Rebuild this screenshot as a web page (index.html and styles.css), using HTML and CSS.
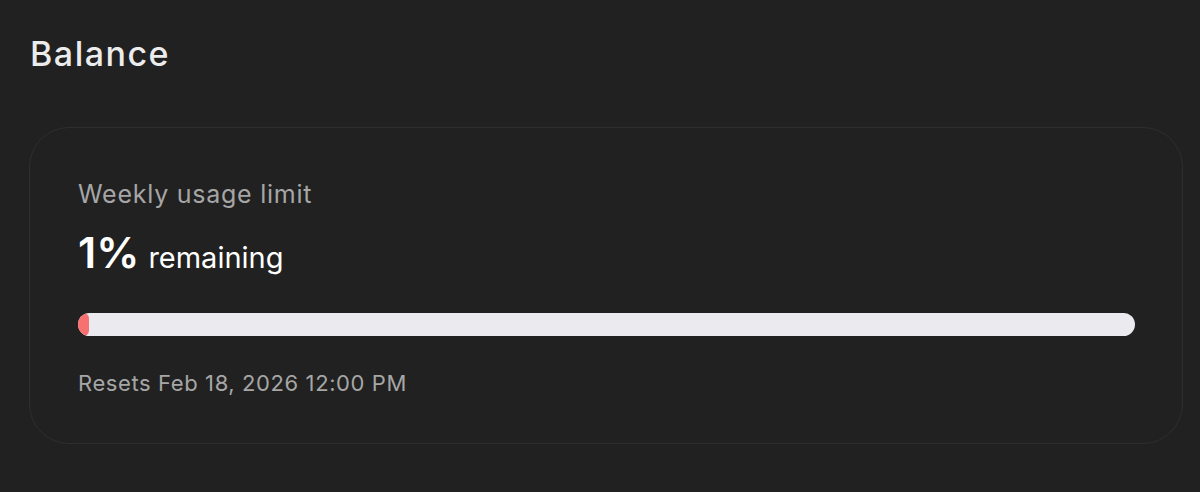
FILE: index.html
```html
<!DOCTYPE html>
<html>
<head>
<meta charset="utf-8">
<link rel="stylesheet" href="styles.css">
</head>
<body>
<main class="page">
  <h1 class="title">Balance</h1>
  <section class="card">
    <div class="label">Weekly usage limit</div>
    <div class="amount"><span class="pct">1%</span> <span class="rem">remaining</span></div>
    <div class="bar"><div class="fill" style="width: 1%"></div></div>
    <div class="resets">Resets Feb 18, 2026 12:00 PM</div>
  </section>
</main>
</body>
</html>
```
FILE: styles.css
```css
html, body {
  margin: 0;
  padding: 0;
  background: #212121;
  font-family: Inter, "Noto Sans", sans-serif;
  color: #ececec;
}
.page {
  padding: 34px 17px 0 29px;
}
.title {
  margin: 0 0 0 1px;
  font-size: 34px;
  font-weight: 500;
  line-height: 40px;
  color: #ececec;
  letter-spacing: 1.5px;
}
.card {
  margin-top: 53px;
  border: 1px solid #2e2e2e;
  border-radius: 40px;
  padding: 51px 47px 47px 48px;
  display: flex;
  flex-direction: column;
}
.label {
  font-size: 25px;
  line-height: 30px;
  color: #a6a6a6;
  letter-spacing: 0.75px;
}
.amount {
  margin-top: 20px;
  display: flex;
  align-items: baseline;
  gap: 9px;
  color: #ffffff;
}
.pct {
  font-size: 43px;
  font-weight: 600;
  line-height: 46px;
  letter-spacing: 0;
}
.rem {
  font-size: 29px;
  font-weight: 400;
}
.bar {
  margin-top: 38px;
  height: 23px;
  border-radius: 12px;
  background: #ebeaef;
  overflow: hidden;
}
.fill {
  height: 100%;
  min-width: 10px;
  background: #f87171;
  border-radius: 12px;
}
.resets {
  margin-top: 34px;
  font-size: 22px;
  line-height: 26px;
  color: #a6a6a6;
  letter-spacing: 0.6px;
}
```
